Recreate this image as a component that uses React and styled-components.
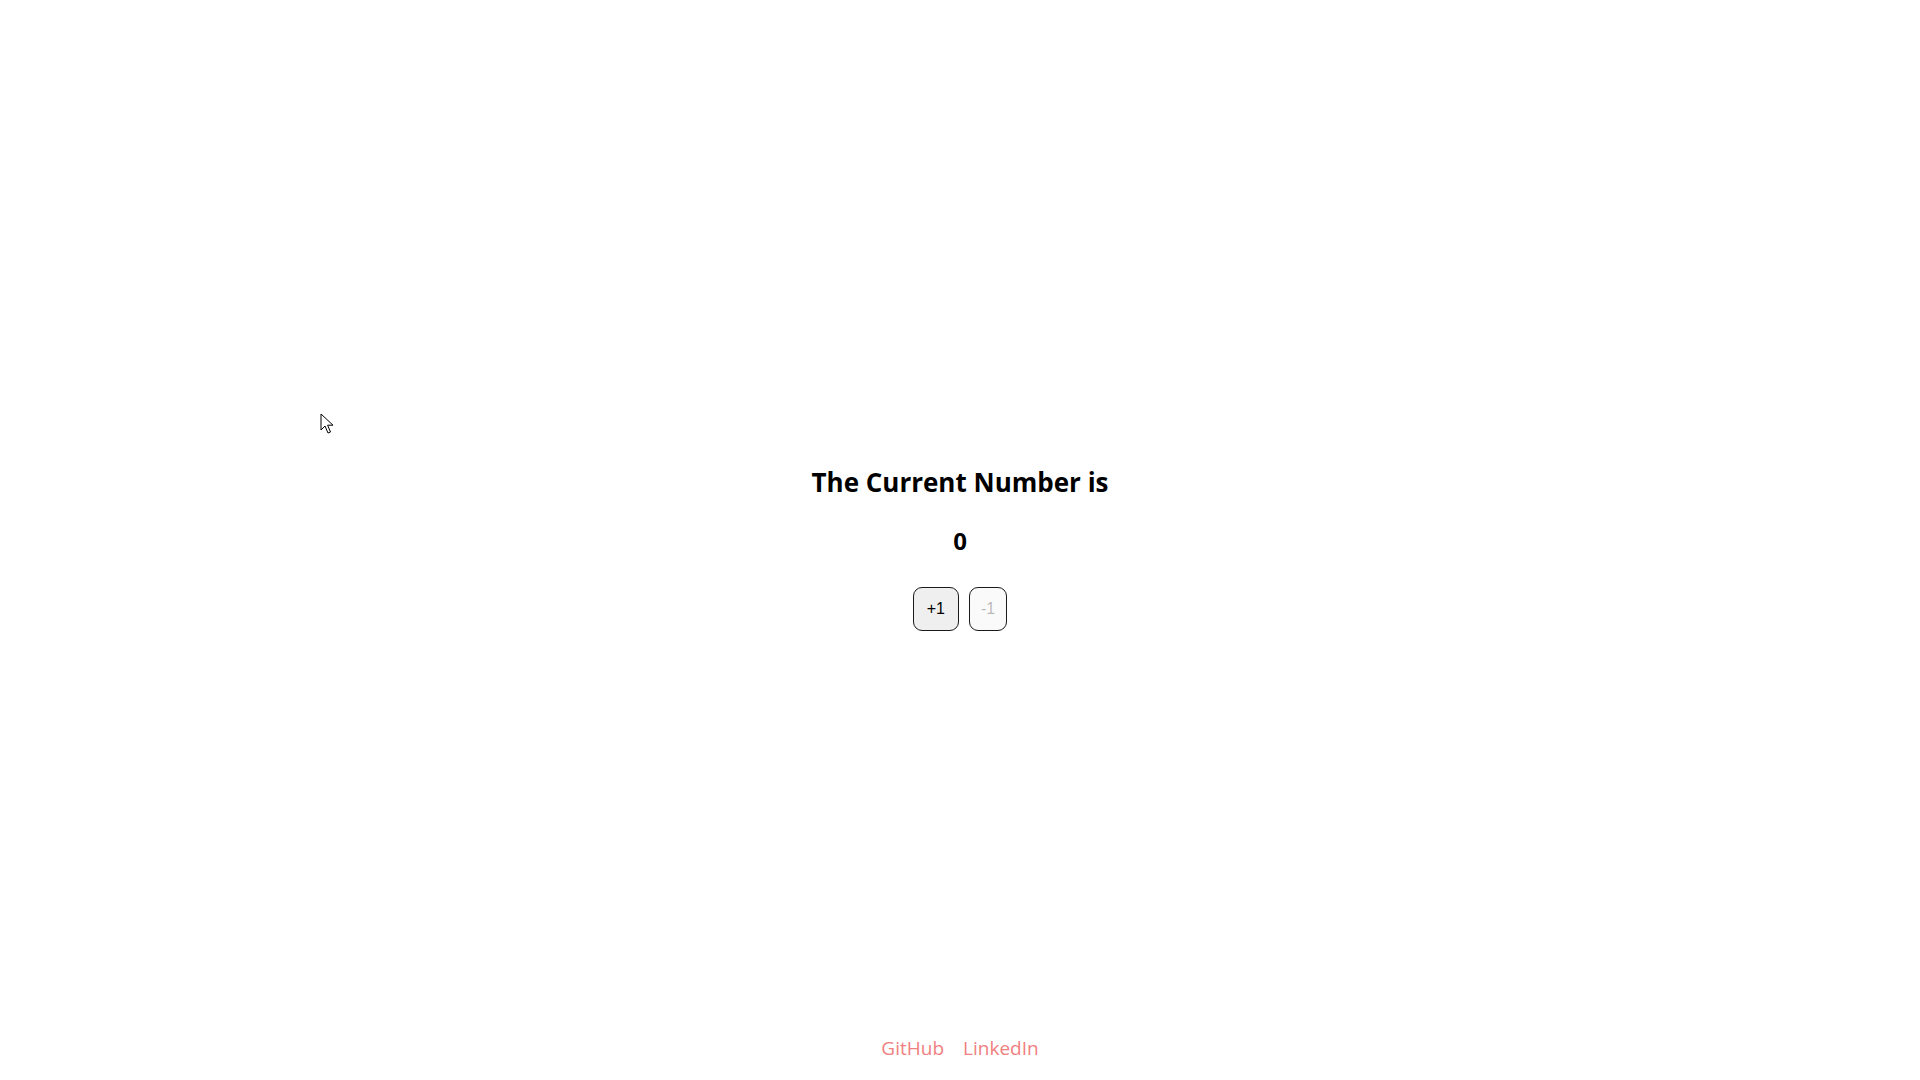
import React, { useState } from 'react'
import styled, { createGlobalStyle } from 'styled-components'

const GlobalStyle = createGlobalStyle`
  html, body {
    margin: 0;
    padding: 0;
    background: #ffffff;
  }
  body {
    font-family: "Open Sans", "Noto Sans", sans-serif;
    color: #000000;
  }
`

const Page = styled.div`
  position: relative;
  min-height: 100vh;
  display: flex;
  flex-direction: column;
`

const Main = styled.main`
  flex: 1;
  display: flex;
  flex-direction: column;
  align-items: center;
  justify-content: center;
  padding-top: 60px;
`

const Title = styled.h1`
  margin: 0;
  font-size: 26px;
  font-weight: 700;
  line-height: 34px;
`

const Count = styled.h2`
  margin: 26px 0 0;
  font-size: 24px;
  font-weight: 700;
  line-height: 32px;
`

const Buttons = styled.div`
  display: flex;
  gap: 10px;
  margin-top: 30px;
`

const CountButton = styled.button`
  font-family: "Liberation Sans", Arial, sans-serif;
  font-size: 16px;
  line-height: 18px;
  padding: 12px ${p => (p.$wide ? 13 : 11)}px;
  border: 1px solid #1a1a1a;
  border-radius: 9px;
  background: #efefef;
  color: #000000;
  cursor: pointer;

  &:disabled {
    background: #fafafa;
    color: rgba(16, 16, 16, 0.3);
    cursor: default;
  }
`

const Footer = styled.footer`
  display: flex;
  justify-content: center;
  gap: 19px;
  padding: 0 0 18px;
`

const FooterLink = styled.a`
  font-size: 19px;
  line-height: 27px;
  color: #f08080;
  text-decoration: none;
`

const Cursor = styled.svg`
  position: absolute;
  left: 320px;
  top: 413px;
  width: 14px;
  height: 22px;
`

const App = () => {
  const [count, setCount] = useState(0)

  return (
    <Page>
      <GlobalStyle />
      <Main>
        <Title>The Current Number is</Title>
        <Count>{count}</Count>
        <Buttons>
          <CountButton $wide onClick={() => setCount(count + 1)}>+1</CountButton>
          <CountButton disabled={count === 0} onClick={() => setCount(count - 1)}>-1</CountButton>
        </Buttons>
      </Main>
      <Footer>
        <FooterLink href="#">GitHub</FooterLink>
        <FooterLink href="#">LinkedIn</FooterLink>
      </Footer>
      <Cursor viewBox="0 0 14 22">
        <path d="M1 1 L1 17 L5 13 L8 20 L10.5 19 L7.6 12.2 L13 12.2 Z" fill="#fff" stroke="#000" strokeWidth="1" strokeLinejoin="round" />
      </Cursor>
    </Page>
  )
}

export default App
